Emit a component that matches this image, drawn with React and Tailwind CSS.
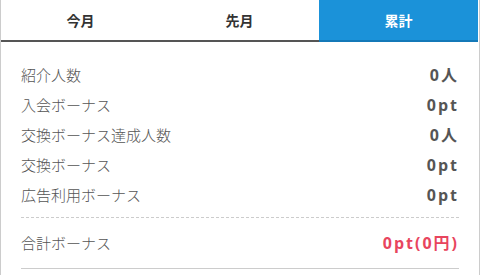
const tabs = ['今月', '先月', '累計'];

const rows = [
  { label: '紹介人数', value: '0人' },
  { label: '入会ボーナス', value: '0pt' },
  { label: '交換ボーナス達成人数', value: '0人' },
  { label: '交換ボーナス', value: '0pt' },
  { label: '広告利用ボーナス', value: '0pt' },
];

function App() {
  const active = 2;

  return (
    <div className="w-[480px] h-[275px] bg-white border-x border-[#cccccc] font-['Noto_Sans_CJK_JP',sans-serif] overflow-hidden">
      <div className="flex h-[42px] pr-px">
        {tabs.map((tab, i) => (
          <div
            key={tab}
            className={`flex-1 flex items-center justify-center text-[14px] font-bold border-b-2 ${
              i === active
                ? 'bg-[#1b92d9] text-white border-[#1479b8]'
                : 'bg-white text-[#333333] border-[#555555]'
            }`}
          >
            {tab}
          </div>
        ))}
      </div>

      <div className="px-5 pt-[18px]">
        <div className="border-b border-dashed border-[#cccccc] pb-[7px]">
          {rows.map((row) => (
            <div key={row.label} className="flex items-center justify-between h-[30px]">
              <span className="text-[15px] font-light text-[#555555]">{row.label}</span>
              <span className="text-[16px] font-bold text-[#555555] tracking-[2px] font-['Open_Sans','Noto_Sans_CJK_JP',sans-serif]">
                {row.value}
              </span>
            </div>
          ))}
        </div>
        <div className="border-b border-[#cccccc] py-[10px]">
          <div className="flex items-center justify-between h-[30px]">
            <span className="text-[15px] font-light text-[#555555]">合計ボーナス</span>
            <span className="text-[16px] font-bold text-[#e8455e] tracking-[2px] font-['Open_Sans','Noto_Sans_CJK_JP',sans-serif]">
              0pt(0円)
            </span>
          </div>
        </div>
      </div>
    </div>
  );
}

export default App;
